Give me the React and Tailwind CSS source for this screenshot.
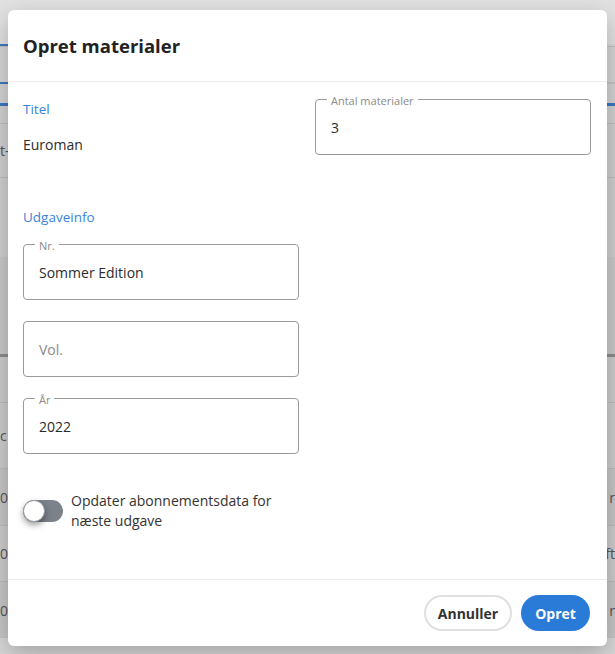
import React from "react";

const font = { fontFamily: "'Open Sans', Lato, 'Noto Sans', sans-serif" };

function OutlinedField({ label, value, placeholder }) {
  return (
    <div className="relative h-[56px] w-full rounded-[4px] border border-[#9a9a9a]">
      {label && (
        <span className="absolute left-[11px] top-0 -translate-y-1/2 bg-white px-[4px] text-[11px] leading-none text-[#8a8a8a]">
          {label}
        </span>
      )}
      <div className="flex h-full items-center px-[15px] text-[14px]">
        {value ? (
          <span className="text-[#2b2b2b]">{value}</span>
        ) : (
          <span className="text-[#8a8a8a]">{placeholder}</span>
        )}
      </div>
    </div>
  );
}

function BackdropPage() {
  // the list page sitting behind the dimmed overlay
  return (
    <div className="flex h-full w-full flex-col bg-[#e0e0e0] text-[14px] text-[#555]">
      <div className="h-[44px] bg-[#e2e2e2]" />
      <div className="flex h-[2px]">
        <div className="w-[40px] bg-[#3a78c4]" />
        <div className="flex-1 bg-[#dadada]" />
      </div>
      <div className="h-[36px] border-t border-[#c4c4c4] bg-[#d6d6d6]" />
      <div className="flex h-[2px]">
        <div className="w-[40px] bg-[#3a78c4]" />
        <div className="flex-1 bg-[#c4c4c4]" />
      </div>
      <div className="h-[19px] bg-[#d4d4d4]" />
      <div className="h-[3px] bg-[#3a78c4]" />
      <div className="h-[18px] border-b border-[#bdbdbd] bg-[#d2d2d2]" />
      <div className="flex h-[54px] items-center justify-between border-b border-[#bdbdbd] bg-[#d0d0d0]">
        <span>t-</span>
      </div>
      <div className="h-[79px] bg-[#d0d0d0]" />
      <div className="h-[97px] bg-[#cacaca]" />
      <div className="h-[3px] bg-[#8c8c8c]" />
      <div className="h-[46px] border-b border-[#bdbdbd] bg-[#cdcdcd]" />
      <div className="flex h-[66px] items-center border-b border-[#bdbdbd] bg-[#cdcdcd]">
        <span>c</span>
      </div>
      <div className="flex h-[57px] items-center justify-between border-b border-[#bdbdbd] bg-[#c7c7c7]">
        <span>0</span>
        <span>r</span>
      </div>
      <div className="flex h-[56px] items-center justify-between border-b border-[#bdbdbd] bg-[#cdcdcd]">
        <span>0</span>
        <span>ft</span>
      </div>
      <div className="flex h-[56px] items-center justify-between bg-[#c7c7c7]">
        <span>0</span>
        <span>r</span>
      </div>
      <div className="flex-1 bg-[#d8d8d8]" />
    </div>
  );
}

export default function App() {
  return (
    <div className="relative h-[654px] w-[615px] overflow-hidden" style={font}>
      <BackdropPage />

      <div
        role="dialog"
        className="absolute left-[8px] top-[10px] flex h-[636px] w-[599px] flex-col rounded-[6px] bg-white shadow-[0_8px_24px_rgba(0,0,0,0.25)]"
      >
        <header className="flex h-[72px] shrink-0 items-center border-b border-[#ececec] px-[15px]">
          <h2 className="text-[18.5px] font-bold text-[#222]">Opret materialer</h2>
        </header>

        <div className="grid flex-1 grid-cols-2 gap-x-[16px] px-[15px] pr-[16px] pt-[17px]">
          <div className="flex flex-col">
            <div className="text-[13.5px] leading-[20px] text-[#3583dc]">Titel</div>
            <div className="mt-[16px] text-[14px] leading-[20px] text-[#2b2b2b]">Euroman</div>

            <div className="mt-[52px] text-[13.5px] leading-[20px] text-[#3583dc]">Udgaveinfo</div>

            <div className="mt-[17px] flex flex-col gap-[21px]">
              <OutlinedField label="Nr." value="Sommer Edition" />
              <OutlinedField placeholder="Vol." />
              <OutlinedField label="År" value="2022" />
            </div>

            <div className="mt-[37px] flex items-center gap-[8px]">
              <div className="relative h-[22px] w-[40px] shrink-0 rounded-full bg-[#7b828a]">
                <div className="absolute left-0 top-0 h-[22px] w-[22px] rounded-full border border-[#9aa0a6] bg-white shadow-[0_3px_6px_rgba(0,0,0,0.4)]" />
              </div>
              <p className="text-[14px] leading-[20px] text-[#333]">
                Opdater abonnementsdata for næste udgave
              </p>
            </div>
          </div>

          <div>
            <OutlinedField label="Antal materialer" value="3" />
          </div>
        </div>

        <footer className="flex h-[67px] shrink-0 items-center justify-end gap-[9px] border-t border-[#ececec] px-[17px]">
          <button className="h-[36px] w-[88px] rounded-full border-2 border-[#e0e0e0] bg-white text-[14px] font-bold text-[#333]">
            Annuller
          </button>
          <button className="h-[36px] w-[69px] rounded-full bg-[#2a7ad8] text-[14px] font-bold text-white">
            Opret
          </button>
        </footer>
      </div>
    </div>
  );
}
